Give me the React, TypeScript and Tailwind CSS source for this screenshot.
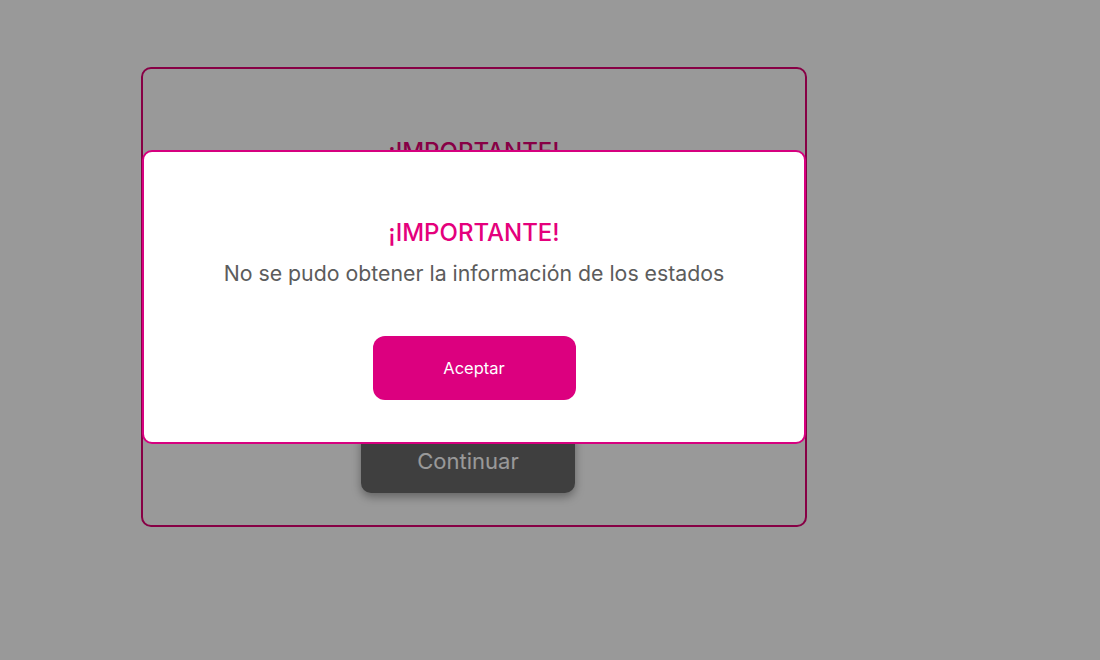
import { useState } from 'react'

// Página de selección de estado con modal de error encima
export default function App() {
  const [abierto, setAbierto] = useState(true)

  return (
    <div className="relative w-[1100px] h-[660px] bg-white overflow-hidden" style={{ fontFamily: 'Inter, "Noto Sans", sans-serif' }}>
      {/* Tarjeta de fondo */}
      <div className="ml-[141px] mt-[67px] w-[666px] h-[460px] border-2 border-[#e20074] rounded-[10px] flex flex-col items-center">
        <h1 className="mt-[67px] text-[24px] leading-[32px] font-medium text-[#e20074]">¡IMPORTANTE!</h1>
        <div className="flex-1" />
        <button className="mb-[32px] mr-[12px] w-[214px] h-[63px] rounded-[10px] bg-[#6a6a6a] text-white text-[22px] shadow-[0_4px_10px_rgba(0,0,0,0.35)]">
          Continuar
        </button>
      </div>

      {/* Overlay */}
      {abierto && (
        <div className="absolute inset-0 bg-black/40">
          <div className="absolute left-[142px] top-[150px] w-[664px] h-[294px] bg-white border-2 border-[#d6007f] rounded-[10px] flex flex-col items-center pt-[65px]">
            <h2 className="text-[24px] leading-[32px] font-medium text-[#e4007c]">¡IMPORTANTE!</h2>
            <p className="mt-[10px] text-[21.3px] leading-[28px] text-[#5c5c5c]">
              No se pudo obtener la información de los estados
            </p>
            <button
              onClick={() => setAbierto(false)}
              className="mt-[49px] w-[203px] h-[64px] rounded-[12px] bg-[#dc007f] text-white text-[16.5px]"
            >
              Aceptar
            </button>
          </div>
        </div>
      )}
    </div>
  )
}
